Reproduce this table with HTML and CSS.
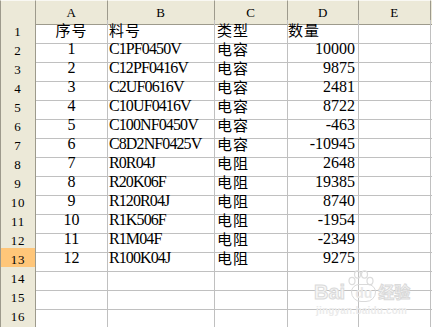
FILE: index.html
```html
<!DOCTYPE html>
<html lang="zh-CN">
<head>
<meta charset="utf-8">
<title>Sheet</title>
<link rel="stylesheet" href="styles.css">
</head>
<body>
<div class="sheet">
  <div class="row head">
    <div class="h corner"></div>
    <div class="h col">A</div>
    <div class="h col">B</div>
    <div class="h col">C</div>
    <div class="h col">D</div>
    <div class="h col">E</div>
    <div class="h col"></div>
  </div>
  <div class="row"><div class="h rh">1</div><div class="c a cjk">序号</div><div class="c b cjk">料号</div><div class="c cc cjk">类型</div><div class="c d cjk dl">数量</div><div class="c"></div><div class="c"></div></div>
  <div class="row"><div class="h rh">2</div><div class="c a">1</div><div class="c b">C1PF0450V</div><div class="c cc cjk">电容</div><div class="c d">10000</div><div class="c"></div><div class="c"></div></div>
  <div class="row"><div class="h rh">3</div><div class="c a">2</div><div class="c b">C12PF0416V</div><div class="c cc cjk">电容</div><div class="c d">9875</div><div class="c"></div><div class="c"></div></div>
  <div class="row"><div class="h rh">4</div><div class="c a">3</div><div class="c b">C2UF0616V</div><div class="c cc cjk">电容</div><div class="c d">2481</div><div class="c"></div><div class="c"></div></div>
  <div class="row"><div class="h rh">5</div><div class="c a">4</div><div class="c b">C10UF0416V</div><div class="c cc cjk">电容</div><div class="c d">8722</div><div class="c"></div><div class="c"></div></div>
  <div class="row"><div class="h rh">6</div><div class="c a">5</div><div class="c b">C100NF0450V</div><div class="c cc cjk">电容</div><div class="c d">-463</div><div class="c"></div><div class="c"></div></div>
  <div class="row"><div class="h rh">7</div><div class="c a">6</div><div class="c b">C8D2NF0425V</div><div class="c cc cjk">电容</div><div class="c d">-10945</div><div class="c"></div><div class="c"></div></div>
  <div class="row"><div class="h rh">8</div><div class="c a">7</div><div class="c b">R0R04J</div><div class="c cc cjk">电阻</div><div class="c d">2648</div><div class="c"></div><div class="c"></div></div>
  <div class="row"><div class="h rh">9</div><div class="c a">8</div><div class="c b">R20K06F</div><div class="c cc cjk">电阻</div><div class="c d">19385</div><div class="c"></div><div class="c"></div></div>
  <div class="row"><div class="h rh">10</div><div class="c a">9</div><div class="c b">R120R04J</div><div class="c cc cjk">电阻</div><div class="c d">8740</div><div class="c"></div><div class="c"></div></div>
  <div class="row"><div class="h rh">11</div><div class="c a">10</div><div class="c b">R1K506F</div><div class="c cc cjk">电阻</div><div class="c d">-1954</div><div class="c"></div><div class="c"></div></div>
  <div class="row"><div class="h rh">12</div><div class="c a">11</div><div class="c b">R1M04F</div><div class="c cc cjk">电阻</div><div class="c d">-2349</div><div class="c"></div><div class="c"></div></div>
  <div class="row"><div class="h rh sel">13</div><div class="c a">12</div><div class="c b">R100K04J</div><div class="c cc cjk">电阻</div><div class="c d">9275</div><div class="c"></div><div class="c"></div></div>
  <div class="row"><div class="h rh">14</div><div class="c"></div><div class="c"></div><div class="c"></div><div class="c"></div><div class="c"></div><div class="c"></div></div>
  <div class="row"><div class="h rh">15</div><div class="c"></div><div class="c"></div><div class="c"></div><div class="c"></div><div class="c"></div><div class="c"></div></div>
  <div class="row"><div class="h rh">16</div><div class="c"></div><div class="c"></div><div class="c"></div><div class="c"></div><div class="c"></div><div class="c"></div></div>
  <div class="row"><div class="h rh"></div><div class="c"></div><div class="c"></div><div class="c"></div><div class="c"></div><div class="c"></div><div class="c"></div></div>

  <div class="watermark">
    <svg class="paw" width="30" height="22" viewBox="0 0 30 22">
      <g fill="none" stroke="#dcdcdc" stroke-width="1.2">
        <ellipse cx="6" cy="11" rx="3" ry="3.6"/>
        <ellipse cx="11.5" cy="4.5" rx="3" ry="3.6"/>
        <ellipse cx="18.5" cy="4.5" rx="3" ry="3.6"/>
        <ellipse cx="24" cy="11" rx="3" ry="3.6"/>
      </g>
    </svg>
    <div class="wm-line"><span class="wm-bai">Bai</span><span class="wm-du">du</span><span class="wm-jy">经验</span></div>
    <div class="wm-url">jingyan.baidu.com</div>
  </div>
</div>
</body>
</html>
```
FILE: styles.css
```css
html, body {
  margin: 0;
  padding: 0;
  background: #ffffff;
  overflow: hidden;
}
.sheet {
  position: relative;
  width: 432px;
  height: 327px;
  overflow: hidden;
  font-family: "Liberation Serif", "Noto Sans CJK SC", serif;
  color: #000;
}
.row {
  display: grid;
  grid-template-columns: 36px 72px 107px 73px 71px 72px 30px;
  height: 19px;
}
.row.head {
  height: 20px;
}
.h, .c {
  box-sizing: border-box;
  white-space: nowrap;
  overflow: visible;
}
.h {
  background: #ece9d8;
  border-right: 1px solid #9d9a8c;
  border-bottom: 1px solid #9d9a8c;
  font-size: 13px;
  letter-spacing: 0.8px;
  text-align: center;
}
.head .h {
  border-top: 1px solid #f9f8f3;
  line-height: 23px;
}
.corner, .rh {
  border-left: 1px solid #9d9a8c;
}
.rh {
  line-height: 23px;
}
.rh.sel {
  background: #ffc679;
  border-bottom-color: #0a246a;
}
.c {
  border-right: 1px solid #c0c0c0;
  border-bottom: 1px solid #c0c0c0;
  font-size: 16px;
  line-height: 20px;
}
.c.cjk {
  font-family: "Noto Sans CJK SC", sans-serif;
  font-size: 15px;
  font-weight: 400;
  letter-spacing: 1px;
  line-height: 19px;
}
.a {
  text-align: center;
}
.b {
  padding-left: 1px;
  letter-spacing: -0.9px;
}
.b.cjk {
  padding-left: 1px;
  letter-spacing: 1px;
}
.cc {
  padding-left: 2px;
}
.d {
  text-align: right;
  padding-right: 3px;
}
.d.dl {
  text-align: left;
  padding-left: 0;
}
.watermark {
  position: absolute;
  left: 312px;
  top: 270px;
  width: 100px;
  color: #fff;
  font-family: "Liberation Sans", "Noto Sans CJK SC", sans-serif;
}
.paw {
  position: absolute;
  left: 34px;
  top: 0;
}
.wm-line {
  position: absolute;
  left: 2px;
  top: 12px;
  display: flex;
  align-items: flex-end;
  font-weight: bold;
  white-space: nowrap;
}
.wm-bai {
  font-size: 20px;
  line-height: 20px;
  -webkit-text-stroke: 1px #dadada;
  color: #f6f6f6;
}
.wm-du {
  font-size: 14px;
  line-height: 16px;
  margin-left: 6px;
  padding: 0 3px;
  border: 1px solid #dadada;
  border-radius: 8px 8px 10px 10px;
  color: #e8e8e8;
}
.wm-jy {
  font-size: 16px;
  line-height: 18px;
  margin-left: 2px;
  -webkit-text-stroke: 1px #dadada;
  color: #f6f6f6;
}
.wm-url {
  position: absolute;
  left: 4px;
  top: 35px;
  font-size: 10px;
  font-weight: bold;
  letter-spacing: 0.2px;
  color: #ebebeb;
  white-space: nowrap;
}
```
